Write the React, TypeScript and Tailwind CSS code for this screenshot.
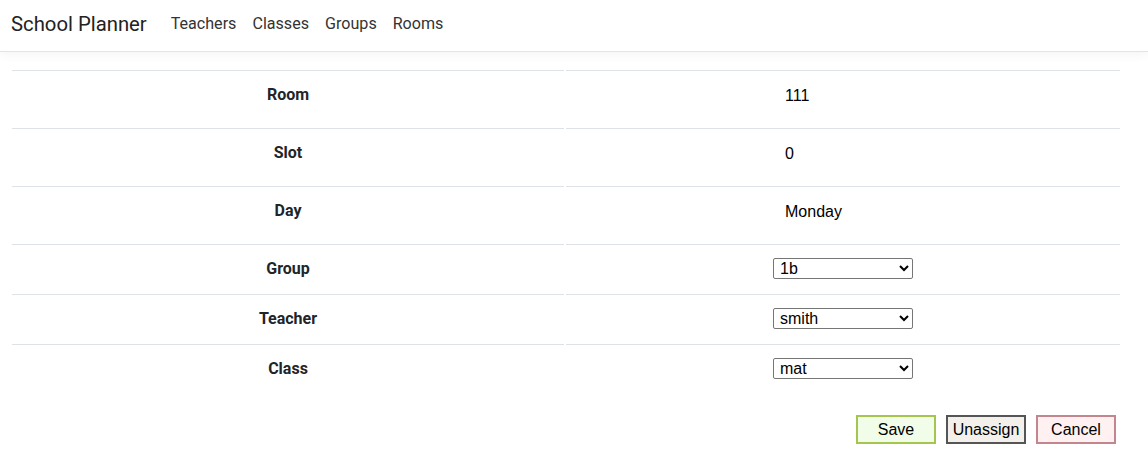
import React from "react";

const rows: { label: string; value?: string; options?: string[] }[] = [
  { label: "Room", value: "111" },
  { label: "Slot", value: "0" },
  { label: "Day", value: "Monday" },
  { label: "Group", options: ["1b"] },
  { label: "Teacher", options: ["smith"] },
  { label: "Class", options: ["mat"] },
];

export default function App() {
  return (
    <div className="min-h-[459px] bg-white text-[#212529] font-['Roboto',sans-serif]">
      <nav className="h-[52px] flex items-center pl-[11px] pb-[4px] border-b border-[#e3e3e8] shadow-[0_3px_10px_rgba(0,0,0,0.045)]">
        <span className="text-[20.3px] text-[#222] mr-[16px] leading-[30px]">School Planner</span>
        <ul className="flex">
          {["Teachers", "Classes", "Groups", "Rooms"].map((l) => (
            <li key={l} className="px-[8px] text-[16.1px] text-[#333] leading-[24px]">
              {l}
            </li>
          ))}
        </ul>
      </nav>
      <div className="px-[12px] pt-[18px] w-[1132px]">
        <div className="flex flex-col">
          {rows.map((r) => (
            <div
              key={r.label}
              className={`flex gap-[2px] ${r.options ? "h-[50px]" : "h-[58px]"}`}
            >
              <div className="w-[552px] border-t border-[#dee2e6] h-full">
                <div className="h-[48px] flex items-center justify-center font-bold text-[16px] text-[#212529]">
                  {r.label}
                </div>
              </div>
              <div className="flex-1 border-t border-[#dee2e6] h-full">
                <div className={`${r.options ? "h-[48px]" : "h-[49px]"} flex items-center justify-center`}>
                  <div className="w-[140px]">
                    {r.options ? (
                      <select className="w-[140px] h-[21px] border border-[#767676] rounded-[2px] bg-white text-[16px] font-['Liberation_Sans',Arial,sans-serif] text-black pl-[2px] appearance-auto">
                        {r.options.map((o) => (
                          <option key={o}>{o}</option>
                        ))}
                      </select>
                    ) : (
                      <span className="pl-[12px] text-[16px] font-['Liberation_Sans',Arial,sans-serif] text-black">
                        {r.value}
                      </span>
                    )}
                  </div>
                </div>
              </div>
            </div>
          ))}
        </div>
        <div className="flex justify-end gap-[10px] pr-[4px] pt-[21px] font-['Liberation_Sans',Arial,sans-serif] text-[16px] text-black">
          <button className="w-[80px] h-[29px] border-2 border-[#a5c64e] bg-[#f1fde9]">Save</button>
          <button className="w-[80px] h-[29px] border-2 border-[#555555] bg-[#f3f0eb]">Unassign</button>
          <button className="w-[80px] h-[29px] border-2 border-[#c2868c] bg-[#fff1f1]">Cancel</button>
        </div>
      </div>
    </div>
  );
}
